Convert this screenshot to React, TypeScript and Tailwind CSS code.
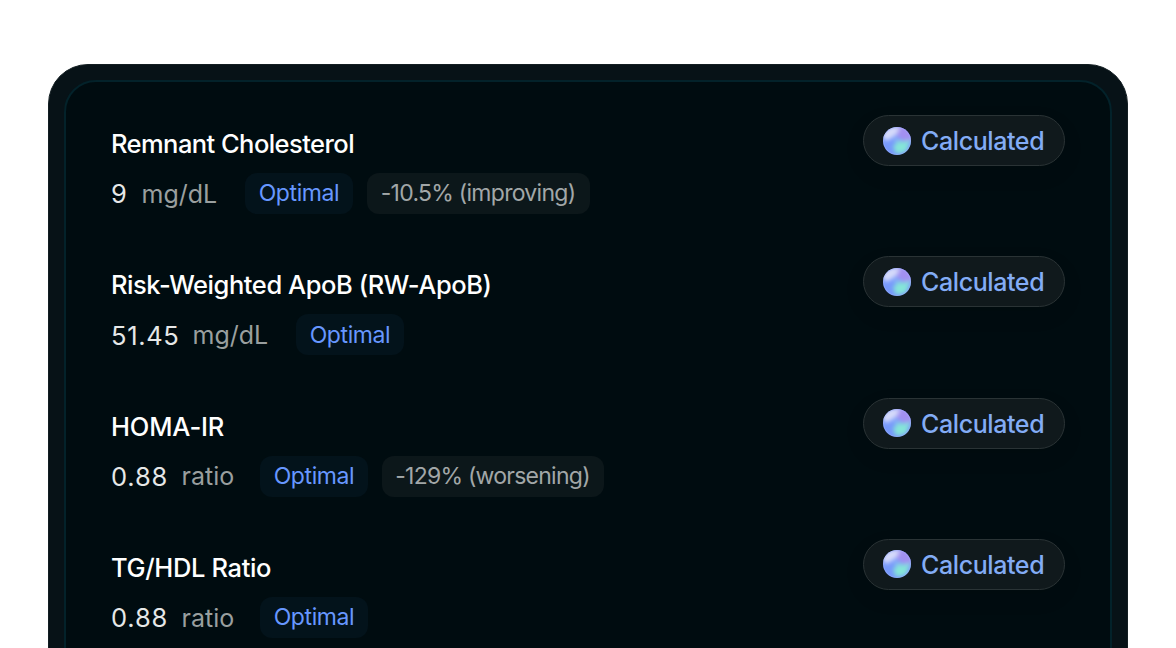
type Marker = {
  name: string;
  value: string;
  unit: string;
  trend?: string;
  nameClass: string;
  valueClass: string;
  unitClass: string;
  trendClass?: string;
};

const markers: Marker[] = [
  {
    name: "Remnant Cholesterol",
    value: "9",
    unit: "mg/dL",
    trend: "-10.5% (improving)",
    nameClass: "tracking-[-0.56px]",
    valueClass: "w-[30.5px]",
    unitClass: "w-[103.5px]",
    trendClass: "w-[223px] tracking-[-0.72px]",
  },
  {
    name: "Risk-Weighted ApoB (RW-ApoB)",
    value: "51.45",
    unit: "mg/dL",
    nameClass: "tracking-[-0.44px]",
    valueClass: "w-[81.5px] tracking-[0.65px]",
    unitClass: "w-[103.5px]",
  },
  {
    name: "HOMA-IR",
    value: "0.88",
    unit: "ratio",
    trend: "-129% (worsening)",
    nameClass: "tracking-[-0.15px]",
    valueClass: "w-[70.5px] tracking-[0.85px]",
    unitClass: "w-[78.5px]",
    trendClass: "w-[222px] tracking-[-0.75px]",
  },
  {
    name: "TG/HDL Ratio",
    value: "0.88",
    unit: "ratio",
    nameClass: "tracking-[-0.35px]",
    valueClass: "w-[70.5px] tracking-[0.85px]",
    unitClass: "w-[78.5px]",
  },
];

function Orb() {
  return (
    <svg className="size-7 shrink-0" viewBox="0 0 28 28" aria-hidden="true">
      <defs>
        <clipPath id="orb-clip">
          <circle cx="14" cy="14" r="14" />
        </clipPath>
        <filter id="orb-soft" x="-50%" y="-50%" width="200%" height="200%">
          <feGaussianBlur stdDeviation="2" />
        </filter>
      </defs>
      <g clipPath="url(#orb-clip)">
        <rect width="28" height="28" fill="#7699fb" />
        <g filter="url(#orb-soft)">
          <path d="M12 -2 H30 V14 L20 14 L13 8 Z" fill="#a290f0" />
          <path d="M-2 9 Q3 -3 17 0 L13 8 L4 14 Z" fill="#d5dafa" />
          <path d="M28 12 L22 15 L16 14 L10 19 L13 27 L23 25 Z" fill="#85e5d8" />
          <path d="M10 12 L17 12 L14 16 Z" fill="#8fc0f0" />
        </g>
        <circle cx="14" cy="14" r="13.5" fill="none" stroke="#a9b1fb" strokeOpacity="0.4" />
      </g>
    </svg>
  );
}

function CalculatedBadge() {
  return (
    <div className="flex h-[51px] w-[202px] shrink-0 items-center gap-2.5 rounded-full border border-[#2a3335] bg-[#10191c] pl-[19px] shadow-[0_8px_20px_rgba(0,0,0,0.1)]">
      <Orb />
      <span className="whitespace-nowrap pt-[2px] text-[25px] font-medium leading-none tracking-[-0.4px] text-[#83acf5]">
        Calculated
      </span>
    </div>
  );
}

function MarkerRow({ marker }: { marker: Marker }) {
  return (
    <li className="flex h-[141.33px] shrink-0 items-start justify-between">
      <div className="pt-[13px]">
        <h3 className={`whitespace-nowrap text-[25.5px] font-[450] leading-8 text-white ${marker.nameClass}`}>
          {marker.name}
        </h3>
        <div className="mt-[13px] flex h-[41px] items-center whitespace-nowrap">
          <span className={`pt-[2px] text-[25.5px] text-[#e6e8e8] ${marker.valueClass}`}>{marker.value}</span>
          <span className={`pt-[2px] text-[25px] text-[#999f9f] ${marker.unitClass}`}>{marker.unit}</span>
          <span className="flex h-[41px] w-[108px] items-center justify-center rounded-xl bg-[#03131b] text-[23px] tracking-[-0.4px] text-[#6797ff]">
            Optimal
          </span>
          {marker.trend && (
            <span
              className={`ml-[13.5px] flex h-[41px] items-center justify-center rounded-xl bg-[#0c171a] text-[23px] text-[#a2a7a8] ${marker.trendClass}`}
            >
              {marker.trend}
            </span>
          )}
        </div>
      </div>
      <CalculatedBadge />
    </li>
  );
}

export default function App() {
  return (
    <main className="h-[648px] w-[1176px] overflow-hidden bg-white px-12 pt-16 font-['Inter',sans-serif]">
      <section className="h-[640px] rounded-[40px] border border-[#131e22] bg-[#071217] p-[15px]">
        <ul className="flex h-[640px] flex-col rounded-[32px] border-2 border-[#03222a] bg-[#000c10] px-[45px] pt-[33px]">
          {markers.map((marker) => (
            <MarkerRow key={marker.name} marker={marker} />
          ))}
        </ul>
      </section>
    </main>
  );
}
